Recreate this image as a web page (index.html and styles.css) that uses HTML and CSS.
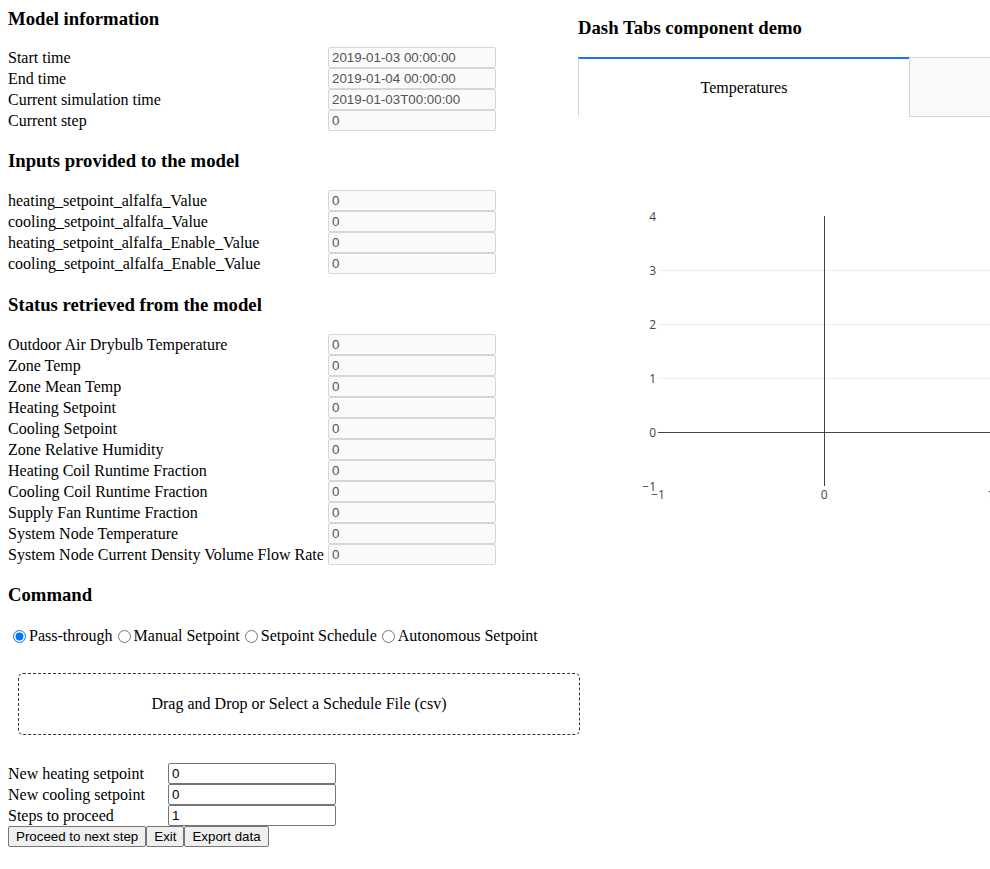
FILE: index.html
```html
<!DOCTYPE html>
<html>
<head>
<meta charset="utf-8">
<link rel="stylesheet" href="styles.css">
</head>
<body>
<div class="page">
  <div class="left">
    <h3 class="section first">Model information</h3>
    <div class="fields">
      <span class="field-label">Start time</span><input class="field-value" readonly value="2019-01-03 00:00:00">
      <span class="field-label">End time</span><input class="field-value" readonly value="2019-01-04 00:00:00">
      <span class="field-label">Current simulation time</span><input class="field-value" readonly value="2019-01-03T00:00:00">
      <span class="field-label">Current step</span><input class="field-value" readonly value="0">
    </div>

    <h3 class="section">Inputs provided to the model</h3>
    <div class="fields">
      <span class="field-label">heating_setpoint_alfalfa_Value</span><input class="field-value" readonly value="0">
      <span class="field-label">cooling_setpoint_alfalfa_Value</span><input class="field-value" readonly value="0">
      <span class="field-label">heating_setpoint_alfalfa_Enable_Value</span><input class="field-value" readonly value="0">
      <span class="field-label">cooling_setpoint_alfalfa_Enable_Value</span><input class="field-value" readonly value="0">
    </div>

    <h3 class="section">Status retrieved from the model</h3>
    <div class="fields">
      <span class="field-label">Outdoor Air Drybulb Temperature</span><input class="field-value" readonly value="0">
      <span class="field-label">Zone Temp</span><input class="field-value" readonly value="0">
      <span class="field-label">Zone Mean Temp</span><input class="field-value" readonly value="0">
      <span class="field-label">Heating Setpoint</span><input class="field-value" readonly value="0">
      <span class="field-label">Cooling Setpoint</span><input class="field-value" readonly value="0">
      <span class="field-label">Zone Relative Humidity</span><input class="field-value" readonly value="0">
      <span class="field-label">Heating Coil Runtime Fraction</span><input class="field-value" readonly value="0">
      <span class="field-label">Cooling Coil Runtime Fraction</span><input class="field-value" readonly value="0">
      <span class="field-label">Supply Fan Runtime Fraction</span><input class="field-value" readonly value="0">
      <span class="field-label">System Node Temperature</span><input class="field-value" readonly value="0">
      <span class="field-label">System Node Current Density Volume Flow Rate</span><input class="field-value" readonly value="0">
    </div>

    <h3 class="section">Command</h3>
    <div class="radios"><label class="radio-item"><input type="radio" name="mode" checked>Pass-through</label><label class="radio-item"><input type="radio" name="mode">Manual Setpoint</label><label class="radio-item"><input type="radio" name="mode">Setpoint Schedule</label><label class="radio-item"><input type="radio" name="mode">Autonomous Setpoint</label></div>

    <div class="upload">Drag and Drop or Select a Schedule File (csv)</div>

    <div class="setpoints">
      <span class="sp-label">New heating setpoint</span><input class="sp-input" value="0">
      <span class="sp-label">New cooling setpoint</span><input class="sp-input" value="0">
      <span class="sp-label">Steps to proceed</span><input class="sp-input" value="1">
    </div>
    <div class="buttons">
      <button class="btn">Proceed to next step</button><button class="btn">Exit</button><button class="btn">Export data</button>
    </div>
  </div>

  <div class="right">
    <div class="right-inner">
      <h3 class="demo-title">Dash Tabs component demo</h3>
      <div class="tabs">
        <div class="tab selected">Temperatures</div>
        <div class="tab"></div>
        <div class="tab"></div>
        <div class="tab"></div>
      </div>
      <div class="graph">
        <svg class="plot" width="1324" height="450" viewBox="0 0 1324 450" xmlns="http://www.w3.org/2000/svg">
          <g class="grid" stroke="#eeeeee" stroke-width="1" shape-rendering="crispEdges">
            <line x1="80" y1="153.5" x2="1244" y2="153.5"/>
            <line x1="80" y1="207.5" x2="1244" y2="207.5"/>
            <line x1="80" y1="261.5" x2="1244" y2="261.5"/>
            <line x1="412.5" y1="99" x2="412.5" y2="369"/>
            <line x1="578.5" y1="99" x2="578.5" y2="369"/>
            <line x1="745.5" y1="99" x2="745.5" y2="369"/>
            <line x1="911.5" y1="99" x2="911.5" y2="369"/>
            <line x1="1077.5" y1="99" x2="1077.5" y2="369"/>
          </g>
          <g class="zero" stroke="#444444" stroke-width="1" shape-rendering="crispEdges">
            <line x1="80" y1="315.5" x2="1244" y2="315.5"/>
            <line x1="246.5" y1="99" x2="246.5" y2="369"/>
          </g>
          <g class="yticks" font-family="'Open Sans', 'DejaVu Sans', sans-serif" font-size="12" fill="#444444" text-anchor="end">
            <text x="78" y="104">4</text>
            <text x="78" y="158">3</text>
            <text x="78" y="212">2</text>
            <text x="78" y="266">1</text>
            <text x="78" y="320">0</text>
            <text x="78" y="374">−1</text>
          </g>
          <g class="xticks" font-family="'Open Sans', 'DejaVu Sans', sans-serif" font-size="12" fill="#444444" text-anchor="middle">
            <text x="80" y="382">−1</text>
            <text x="246.3" y="382">0</text>
            <text x="412.6" y="382">1</text>
            <text x="578.9" y="382">2</text>
            <text x="745.1" y="382">3</text>
            <text x="911.4" y="382">4</text>
            <text x="1077.7" y="382">5</text>
            <text x="1244" y="382">6</text>
          </g>
        </svg>
      </div>
    </div>
  </div>
</div>
</body>
</html>
```

FILE: styles.css
```css
html, body {
  margin: 0;
  padding: 0;
  background: #ffffff;
}

body {
  font-family: "Liberation Serif", "Times New Roman", serif;
  font-size: 16px;
  color: #000000;
}

.page {
  display: flex;
  align-items: flex-start;
  padding: 8px 0 0 8px;
  min-height: 861px;
}

.left {
  flex: 0 0 570px;
  width: 570px;
}

.section {
  font-size: 18.72px;
  font-weight: bold;
  margin: 19.2px 0 18.72px;
  line-height: 21.5px;
}

.section.first {
  margin-top: 0;
  margin-bottom: 17.5px;
}

.fields {
  display: grid;
  grid-template-columns: 320px 168px;
  grid-auto-rows: 21px;
  align-items: center;
}

.field-label {
  white-space: nowrap;
  line-height: 21px;
}

.field-value {
  box-sizing: border-box;
  width: 168px;
  height: 21px;
  margin: 0;
  padding: 1px 3px;
  border: 1px solid #d6d6d6;
  border-radius: 2px;
  background: #fafafa;
  color: #545454;
  font-family: "Liberation Sans", Arial, sans-serif;
  font-size: 13.333px;
  outline: none;
}

.radios {
  margin-top: 20.5px;
  height: 20px;
  line-height: 20px;
  white-space: nowrap;
}

.radio-item input {
  margin: 3px 3px 0 5px;
  vertical-align: -2px;
  width: 13px;
  height: 13px;
}

.upload {
  box-sizing: content-box;
  width: 560px;
  height: 60px;
  line-height: 60px;
  margin: 27px 10px 10px 10px;
  border: 1px dashed #333333;
  border-radius: 5px;
  text-align: center;
}

.setpoints {
  margin-top: 28px;
  display: grid;
  grid-template-columns: 160px 168px;
  grid-auto-rows: 21px;
  align-items: center;
}

.sp-label {
  white-space: nowrap;
  line-height: 21px;
}

.sp-input {
  box-sizing: border-box;
  width: 168px;
  height: 21px;
  margin: 0;
  padding: 1px 3px;
  border: 1px solid #767676;
  border-radius: 2px;
  background: #ffffff;
  color: #000000;
  font-family: "Liberation Sans", Arial, sans-serif;
  font-size: 13.333px;
}

.buttons {
  display: flex;
  gap: 0;
}

.btn {
  box-sizing: border-box;
  height: 21px;
  margin: 0;
  padding: 1px 7px;
  border: 1px solid #767676;
  border-radius: 2px;
  background: #efefef;
  color: #000000;
  font-family: "Liberation Sans", Arial, sans-serif;
  font-size: 13.333px;
  line-height: 17px;
}

.right {
  flex: 1 1 auto;
  min-width: 0;
  overflow: hidden;
}

.right-inner {
  width: 1324px;
}

.demo-title {
  font-size: 18.72px;
  font-weight: bold;
  line-height: 21.5px;
  margin: 9.25px 0 18.25px;
}

.tabs {
  display: flex;
  height: 60px;
}

.tab {
  box-sizing: border-box;
  flex: 0 0 331px;
  height: 60px;
  display: flex;
  align-items: center;
  justify-content: center;
  background: #f9f9f9;
  border: 1px solid #d6d6d6;
  border-left: none;
}

.tab.selected {
  background: #ffffff;
  border-top: 2px solid #1975fa;
  border-left: 1px solid #d6d6d6;
  border-right: none;
  border-bottom: none;
}

.tab.selected + .tab {
  border-left: 1px solid #d6d6d6;
}

.graph {
  height: 450px;
}

.plot {
  display: block;
}
```
